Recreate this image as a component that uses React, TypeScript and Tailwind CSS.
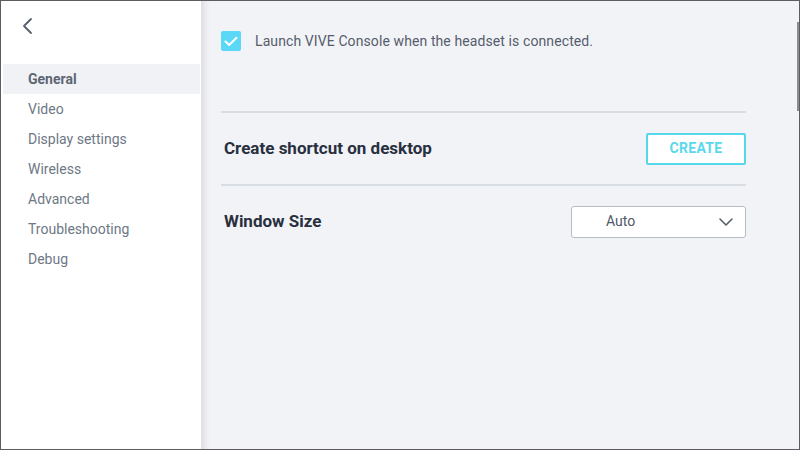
import React from "react";

const navItems = [
  "General",
  "Video",
  "Display settings",
  "Wireless",
  "Advanced",
  "Troubleshooting",
  "Debug",
];

function Sidebar() {
  return (
    <aside className="w-[200px] shrink-0 bg-white flex flex-col">
      <button className="ml-[19px] mt-[16px] w-[14px] h-[18px] flex items-center justify-center">
        <svg width="12" height="18" viewBox="0 0 12 18" fill="none">
          <path d="M10 2 L3 9 L10 16" stroke="#58606d" strokeWidth="1.8" strokeLinecap="round" strokeLinejoin="round" />
        </svg>
      </button>
      <nav className="mt-[29px] flex flex-col">
        {navItems.map((item, i) => (
          <div
            key={item}
            className={
              i === 0
                ? "ml-[2px] mr-[1px] h-[30px] flex items-center pl-[25px] bg-[#f0f2f6] text-[#5d6673] font-bold text-[14px]"
                : "ml-[2px] mr-[1px] h-[30px] flex items-center pl-[25px] text-[#6e7886] text-[14px]"
            }
          >
            {item}
          </div>
        ))}
      </nav>
    </aside>
  );
}

function Main() {
  return (
    <main className="relative flex-1 bg-[#f2f3f7] shadow-[inset_10px_0_8px_-8px_rgba(0,0,0,0.12)] pt-[30px] pl-[20px] pr-[53px]">
      <label className="flex items-center h-[20px]">
        <span className="w-[20px] h-[20px] rounded-[2px] bg-[#5ad8f6] flex items-center justify-center">
          <svg width="14" height="11" viewBox="0 0 14 11" fill="none">
            <path d="M1.5 5.5 L5.2 9 L12.5 1.8" stroke="white" strokeWidth="2" strokeLinecap="round" strokeLinejoin="round" />
          </svg>
        </span>
        <span className="ml-[14px] text-[14px] tracking-[0.1px] text-[#555d6c]">
          Launch VIVE Console when the headset is connected.
        </span>
      </label>

      <div className="mt-[60px] h-[2px] bg-[#d8dce3]" />
      <div className="h-[71px] flex items-center justify-between">
        <span className="pl-[3px] text-[17px] font-bold text-[#283040]">
          Create shortcut on desktop
        </span>
        <button className="w-[100px] h-[32px] bg-white border-2 border-[#57d8ea] rounded-[2px] text-[#5ad8ec] font-bold text-[14px] tracking-[0.3px]">
          CREATE
        </button>
      </div>

      <div className="h-[2px] bg-[#d8dce3]" />
      <div className="h-[71px] flex items-center justify-between">
        <span className="pl-[3px] text-[17px] font-bold text-[#283040]">
          Window Size
        </span>
        <div className="w-[175px] h-[32px] bg-white border border-[#b6bcc6] rounded-[3px] flex items-center justify-between pl-[34px] pr-[12px]">
          <span className="text-[14px] text-[#4f5766]">Auto</span>
          <svg width="14" height="8" viewBox="0 0 14 8" fill="none">
            <path d="M1 1 L7 7 L13 1" stroke="#58606d" strokeWidth="1.6" strokeLinecap="round" strokeLinejoin="round" />
          </svg>
        </div>
      </div>

      {/* scrollbar thumb */}
      <div className="absolute right-0 top-[21px] w-[2px] h-[89px] bg-[#8a8d93]" />
    </main>
  );
}

export default function App() {
  return (
    <div
      className="w-[800px] h-[450px] border border-[#5b5d60] flex overflow-hidden"
      style={{ fontFamily: "Roboto, 'Noto Sans', sans-serif" }}
    >
      <Sidebar />
      <Main />
    </div>
  );
}
